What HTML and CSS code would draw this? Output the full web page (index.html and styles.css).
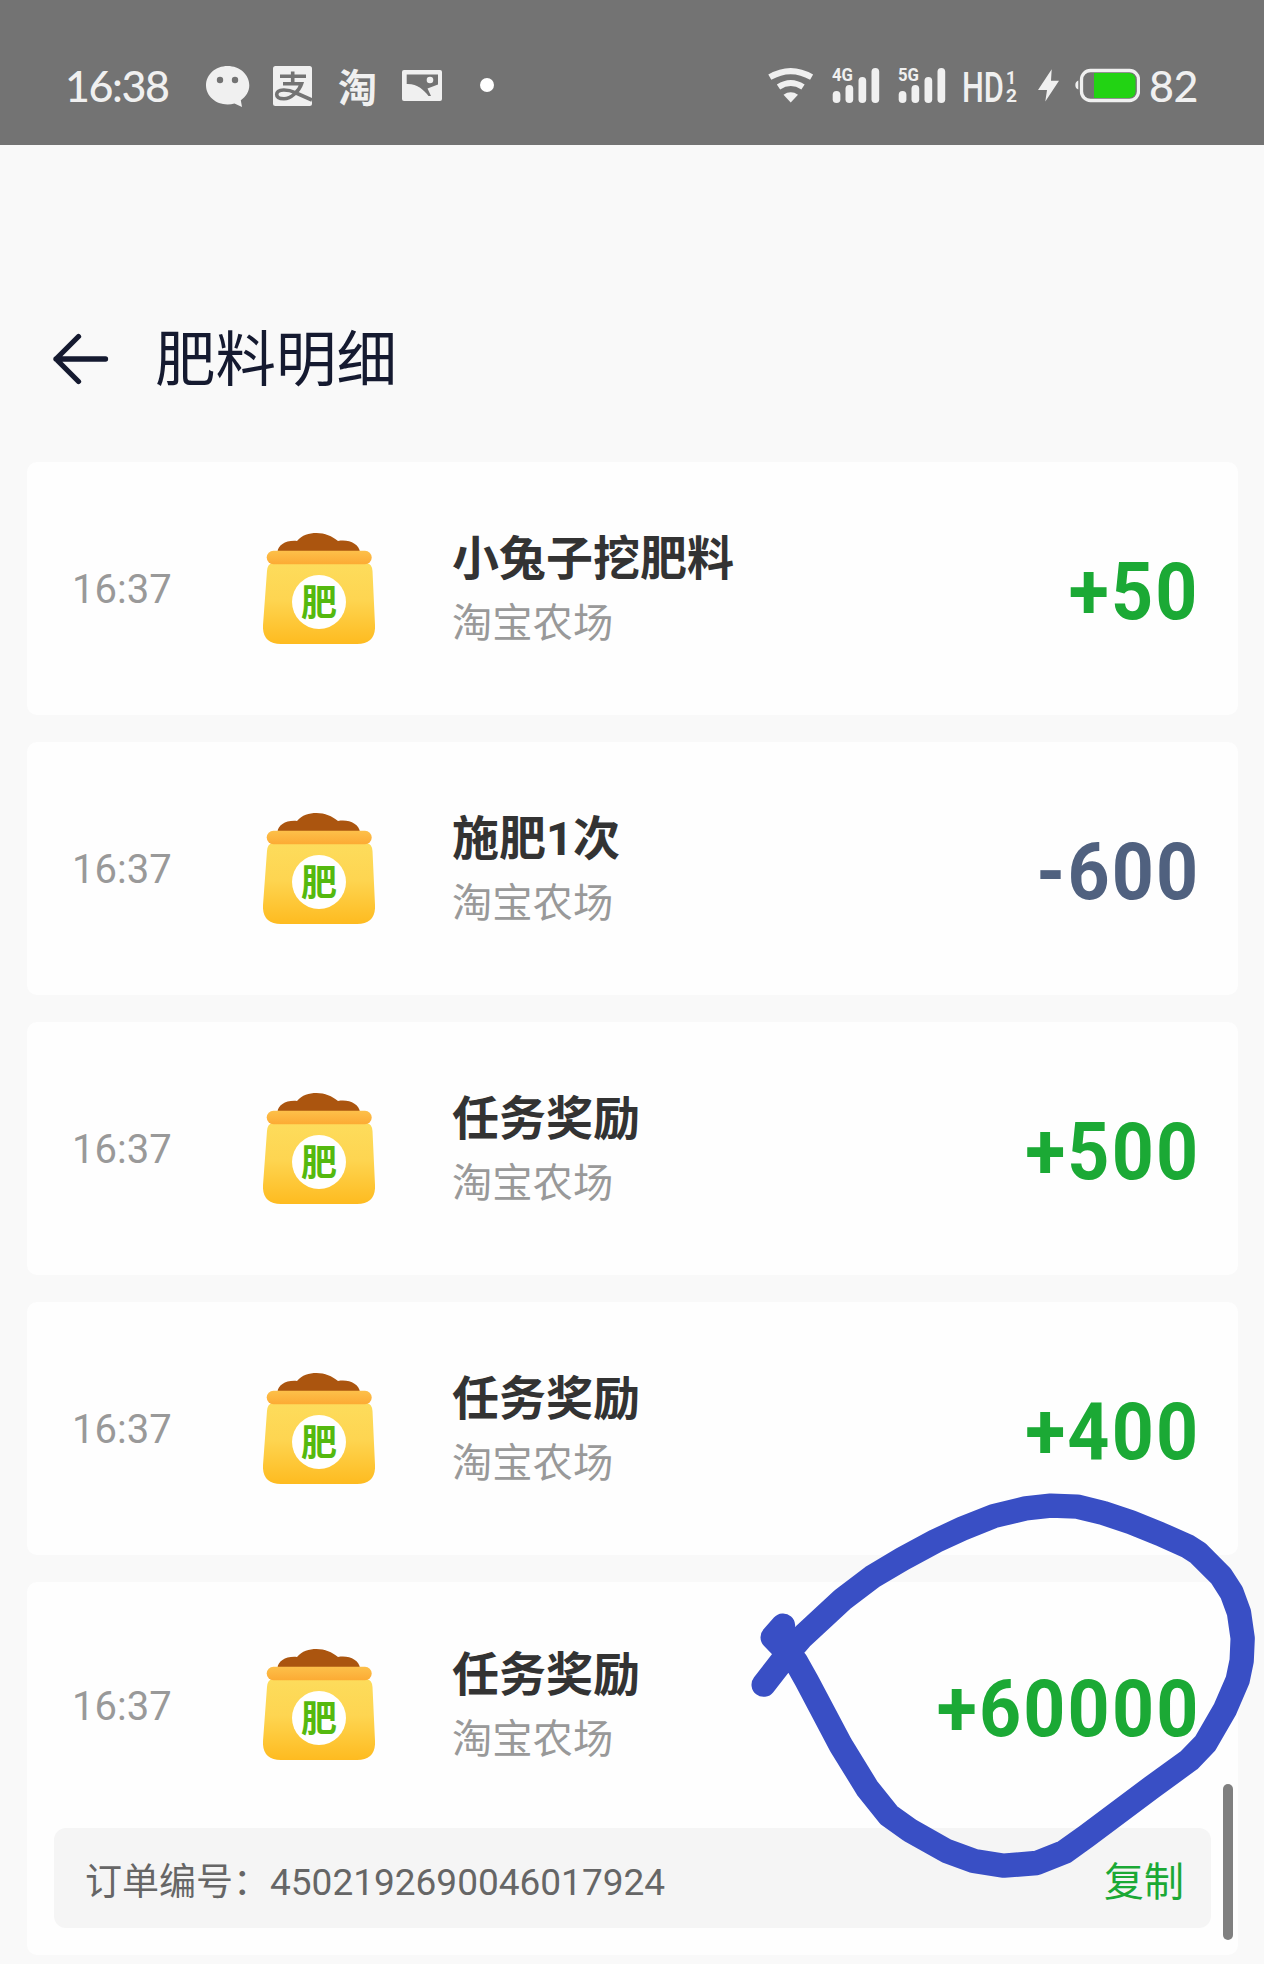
FILE: index.html
```html
<!DOCTYPE html>
<html lang="zh-CN">
  <head>
    <meta charset="UTF-8" />
    <meta name="viewport" content="width=device-width, initial-scale=1.0" />
    <title>肥料明细</title>
    <link rel="stylesheet" href="styles.css">
  </head>
  <body>
    <!-- shared bag icon -->
    <svg class="defs" width="0" height="0">
      <defs>
        <linearGradient id="bag-body" x1="0" y1="0" x2="0" y2="1">
          <stop offset="0" stop-color="#fddc5c" />
          <stop offset="0.45" stop-color="#fed551" />
          <stop offset="1" stop-color="#febb20" />
        </linearGradient>
        <linearGradient id="bag-band" x1="0" y1="0" x2="0" y2="1">
          <stop offset="0" stop-color="#fdc04a" />
          <stop offset="1" stop-color="#fcab34" />
        </linearGradient>
      </defs>
      <symbol id="bag" viewBox="0 0 112 112">
        <path fill="#ab550f" d="M14.5 19C15 12 23 7 34 8C39 2 46 0 53.500 0C62 0 69 3 75 8C86 6 96 11 97 19Z" />
        <path fill="url(#bag-body)" d="M9 30H104Q109 31 109.500 38L112 92Q113 111 94 111H18Q-1 111 0 92L4 38Q4.500 31 9 30Z" />
        <rect x="3.700" y="17.700" width="105" height="13.500" rx="6.700" fill="url(#bag-band)" />
        <circle cx="56" cy="69" r="27" fill="#fff" />
        <text class="bag-text" x="56" y="83" text-anchor="middle">肥</text>
      </symbol>
    </svg>

    <!-- status bar -->
    <div class="status-bar">
      <div class="status-left">
        <span class="status-time">16:38</span>
        <svg class="wechat" width="44" height="50" viewBox="0 0 44 50">
          <path fill="#f0f0f0" d="M21.600 6C33.600 6 43.300 14.500 43.300 25.300C43.300 31.500 40 36.800 34.800 40.300L36 47L28.500 43.600C26.300 44.200 24 44.500 21.600 44.500C9.600 44.500 0 36 0 25.300C0 14.500 9.600 6 21.600 6Z" />
          <circle cx="14" cy="20" r="3.200" fill="#737373" />
          <circle cx="29" cy="20" r="3.200" fill="#737373" />
        </svg>
        <svg class="alipay" width="39" height="50" viewBox="0 0 39 50">
          <rect y="6" width="39" height="40" rx="2.500" fill="#f0f0f0" />
          <path fill="none" stroke="#737373" stroke-width="3.600" d="M7 16.200H33M19.700 11.500V24M10 23.800H28.500C26 31 18 38.800 11 38.800C6 38.800 3.700 37 3.700 34.500C3.700 28 16 29.500 22 32.500L39 40" />
        </svg>
        <span class="taobao">淘</span>
        <svg class="photo" width="40" height="50" viewBox="0 0 40 50">
          <rect y="10" width="40" height="31" rx="2" fill="#f0f0f0" />
          <path fill="#737373" d="M4.700 14.500H36V24.500L25.500 28.500L29 36H26.500C22 30 15 23.500 4.700 24Z" />
          <circle cx="28" cy="20" r="3.300" fill="#f0f0f0" />
        </svg>
        <i class="dot"></i>
      </div>
      <div class="status-right">
        <svg class="wifi" width="46" height="50" viewBox="0 0 46 50">
          <path fill="none" stroke="#f0f0f0" stroke-width="6" d="M1.800 17.200Q22.700 5 43.600 17.200M10.500 27Q22.700 19 35 27" />
          <path fill="#f0f0f0" d="M15.500 34.700Q22.700 30 30 34.700L22.700 42.500Z" />
        </svg>
        <svg class="signal" width="48" height="50" viewBox="0 0 48 50">
          <text class="net" x="0" y="20.700" textLength="21" lengthAdjust="spacingAndGlyphs">4G</text>
          <rect x="0.700" y="31" width="7.700" height="12" rx="3.800" />
          <rect x="13.500" y="25" width="7.700" height="18" rx="3.800" />
          <rect x="26.500" y="17" width="7.700" height="26" rx="3.800" />
          <rect x="39.500" y="8" width="7.700" height="35" rx="3.800" />
        </svg>
        <svg class="signal signal-5g" width="48" height="50" viewBox="0 0 48 50">
          <text class="net" x="0" y="20.700" textLength="21" lengthAdjust="spacingAndGlyphs">5G</text>
          <rect x="0.700" y="31" width="7.700" height="12" rx="3.800" />
          <rect x="13.500" y="25" width="7.700" height="18" rx="3.800" />
          <rect x="26.500" y="17" width="7.700" height="26" rx="3.800" />
          <rect x="39.500" y="8" width="7.700" height="35" rx="3.800" />
        </svg>
        <svg class="hd" width="53" height="50" viewBox="0 0 53 50">
          <text class="hd-text" x="-2" y="42" textLength="42" lengthAdjust="spacingAndGlyphs">HD</text>
          <text class="hd-num" x="42" y="23.500">1</text>
          <text class="hd-num" x="42" y="42" textLength="11" lengthAdjust="spacingAndGlyphs">2</text>
        </svg>
        <svg class="bolt" width="21" height="50" viewBox="0 0 21 50">
          <path fill="#f0f0f0" d="M13.700 9.300L13 20.700H21L7.300 41.500L9 30H0Z" />
        </svg>
        <svg class="battery" width="65" height="50" viewBox="0 0 65 50">
          <path fill="#f0f0f0" d="M3.300 20.500V29.500Q0.300 28.500 0.300 25Q0.300 21.500 3.300 20.500Z" />
          <path fill="#22d313" d="M19 13H53Q60.500 13 60.500 20V31Q60.500 38 53 38H19Z" />
          <rect x="6.500" y="10.500" width="57" height="30" rx="9" fill="none" stroke="#f0f0f0" stroke-width="3.300" />
        </svg>
        <span class="battery-num">82</span>
      </div>
    </div>

    <!-- header -->
    <div class="header">
      <svg class="back" width="56" height="52" viewBox="0 0 56 52">
        <path fill="none" stroke="#151a30" stroke-width="5.300" stroke-linecap="round" stroke-linejoin="round" d="M25.500 3.500L3 26L25.500 48.500M3 26H52.500" />
      </svg>
      <h1 class="header-title">肥料明细</h1>
    </div>

    <!-- list -->
    <ul class="record-list">
      <li class="record">
        <div class="record-row">
          <span class="record-time">16:37</span>
          <svg class="record-icon"><use href="#bag" /></svg>
          <div class="record-info">
            <p class="record-name">小兔子挖肥料</p>
            <p class="record-from">淘宝农场</p>
          </div>
          <span class="record-num">+50</span>
        </div>
      </li>
      <li class="record">
        <div class="record-row">
          <span class="record-time">16:37</span>
          <svg class="record-icon"><use href="#bag" /></svg>
          <div class="record-info">
            <p class="record-name">施肥1次</p>
            <p class="record-from">淘宝农场</p>
          </div>
          <span class="record-num minus">-600</span>
        </div>
      </li>
      <li class="record">
        <div class="record-row">
          <span class="record-time">16:37</span>
          <svg class="record-icon"><use href="#bag" /></svg>
          <div class="record-info">
            <p class="record-name">任务奖励</p>
            <p class="record-from">淘宝农场</p>
          </div>
          <span class="record-num">+500</span>
        </div>
      </li>
      <li class="record">
        <div class="record-row">
          <span class="record-time">16:37</span>
          <svg class="record-icon"><use href="#bag" /></svg>
          <div class="record-info">
            <p class="record-name">任务奖励</p>
            <p class="record-from">淘宝农场</p>
          </div>
          <span class="record-num">+400</span>
        </div>
      </li>
      <li class="record has-order">
        <div class="record-row">
          <span class="record-time">16:37</span>
          <svg class="record-icon"><use href="#bag" /></svg>
          <div class="record-info">
            <p class="record-name">任务奖励</p>
            <p class="record-from">淘宝农场</p>
          </div>
          <span class="record-num">+60000</span>
        </div>
        <div class="order">
          <span>订单编号：4502192690046017924</span>
          <a class="copy">复制</a>
        </div>
      </li>
    </ul>

    <i class="scrollbar"></i>

    <!-- pen mark -->
    <svg class="mark" width="524" height="440" viewBox="0 0 1572 1320">
      <path d="M71 674L152 570L185 532L308 418L398 350L487 297L587 243L667 206L762 168L857 145L932 137L1012 140L1090 159L1173 187L1260 222L1345 260L1373 278L1443 348L1475 398L1497 458L1508 535L1505 602L1493 660L1455 748L1396 850L1348 900L1235 982L1040 1128L973 1176L890 1209L792 1217L702 1203L620 1173L510 1111L447 1066L382 985L302 855L200 662L168 605L98 532L129 497" />
    </svg>
  </body>
</html>
```

FILE: styles.css
```css
/*global*/
* {
  margin: 0;
  padding: 0;
  box-sizing: border-box;
}

body {
  position: relative;
  height: 1964px;
  overflow: hidden;
  background-color: #f9f9f9;
  font-family: Roboto, "Noto Sans CJK SC", sans-serif;
}

ul {
  list-style: none;
}

svg {
  display: block;
  flex-shrink: 0;
}

.defs {
  position: absolute;
}

/*status bar*/
.status-bar {
  display: flex;
  justify-content: space-between;
  height: 145px;
  padding: 60px 65px 0 65px;
  background-color: #737373;
  color: #f0f0f0;
}

.status-left,
.status-right {
  display: flex;
  align-items: center;
  height: 50px;
}

.status-time,
.battery-num {
  font-family: Lato, sans-serif;
  font-size: 43px;
  font-weight: 500;
  line-height: 50px;
}

.status-time {
  width: 141px;
  padding-top: 2px;
  letter-spacing: -1.4px;
}

.alipay {
  margin-left: 23px;
}

.taobao {
  width: 40px;
  margin-left: 26px;
  font-family: "Noto Sans CJK SC", sans-serif;
  font-size: 39px;
  font-weight: 700;
  line-height: 48px;
}

.photo {
  margin-left: 24px;
}

.dot {
  width: 14px;
  height: 14px;
  margin-left: 38px;
  border-radius: 50%;
  background-color: #fff;
}

.signal {
  margin-left: 18px;
  fill: #f0f0f0;
}

.hd {
  margin-left: 18px;
  overflow: visible;
  fill: #f0f0f0;
}

.net {
  font-size: 17.500px;
  font-weight: 700;
}

.hd-text {
  font-size: 43px;
  font-weight: 500;
}

.hd-num {
  font-size: 17.500px;
  font-weight: 700;
}

.bolt {
  margin-left: 21px;
}

.battery {
  margin-left: 16px;
}

.battery-num {
  width: 50px;
  margin-left: 9px;
  padding-top: 2px;
  letter-spacing: -0.5px;
}

/*header*/
.header {
  display: flex;
  align-items: center;
  height: 317px;
  padding: 110px 53px 0;
}

.header-title {
  margin-left: 46px;
  padding-top: 5px;
  color: #151a30;
  font-size: 60.500px;
  font-weight: 400;
  line-height: 80px;
}

/*list*/
.record-list {
  display: flex;
  flex-direction: column;
  gap: 27px;
  padding: 0 26px 0 27px;
}

.record {
  height: 253px;
  border-radius: 10px;
  background-color: #fefefe;
}

.record-row {
  display: flex;
  align-items: center;
  height: 253px;
  padding: 0 38px 0 45px;
}

.record-time {
  width: 191px;
  padding-top: 2px;
  color: #999;
  font-size: 40px;
}

.record-icon {
  width: 112px;
  height: 112px;
}

.bag-text {
  fill: #55b90f;
  font-family: "Noto Sans CJK SC", sans-serif;
  font-size: 36px;
  font-weight: 700;
}

.record-info {
  flex: 1;
  margin-left: 77px;
  padding-top: 5px;
}

.record-name {
  color: #333;
  font-size: 47px;
  font-weight: 700;
  line-height: 64px;
}

.record-from {
  color: #999;
  font-size: 40.300px;
  line-height: 65px;
}

.record-num {
  padding-top: 7px;
  color: #1ba935;
  font-size: 79px;
  font-weight: 700;
  letter-spacing: 2.3px;
  transform: scaleX(0.93);
  transform-origin: right;
}

.minus {
  color: #50617f;
}

/*order*/
.has-order {
  height: 373px;
}

.has-order .record-row {
  height: 246px;
}

.order {
  display: flex;
  align-items: center;
  justify-content: space-between;
  height: 100px;
  margin: 0 27px;
  padding: 2px 27px 0 31px;
  border-radius: 12px;
  background-color: #f5f5f5;
  color: #666;
  font-size: 37px;
}

.copy {
  color: #1ba935;
  font-size: 40px;
}

/*overlay*/
.scrollbar {
  position: absolute;
  top: 1784px;
  right: 31px;
  width: 10px;
  height: 156px;
  border-radius: 5px;
  background-color: #808080;
}

.mark {
  position: absolute;
  top: 1460px;
  left: 740px;
  fill: none;
  stroke: #394fc5;
  stroke-width: 73;
  stroke-linecap: round;
  stroke-linejoin: round;
}
```
